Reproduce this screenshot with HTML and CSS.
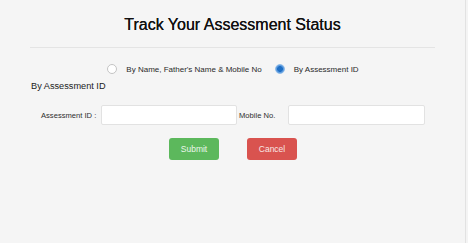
FILE: index.html
```html
<!DOCTYPE html>
<html lang="en">
<head>
<meta charset="utf-8">
<title>Track Your Assessment Status</title>
<link rel="stylesheet" href="styles.css">
</head>
<body>
<div class="panel">
  <h1 class="title">Track Your Assessment Status</h1>
  <div class="rule"></div>
  <div class="choices">
    <label class="choice"><span class="radio"></span><span class="choice-text">By Name, Father's Name &amp; Mobile No</span></label>
    <label class="choice"><span class="radio checked"></span><span class="choice-text">By Assessment ID</span></label>
  </div>
  <div class="section-title">By Assessment ID</div>
  <div class="form-row">
    <label class="field-label first">Assessment ID :</label>
    <div class="input wide1"></div>
    <label class="field-label second">Mobile No.</label>
    <div class="input wide2"></div>
  </div>
  <div class="actions">
    <button class="btn btn-submit" type="button">Submit</button>
    <button class="btn btn-cancel" type="button">Cancel</button>
  </div>
</div>
</body>
</html>
```
FILE: styles.css
```css
html, body {
  margin: 0;
  padding: 0;
  background: #f4f4f4;
}
body {
  font-family: "Liberation Sans", Arial, sans-serif;
  color: #333;
  width: 468px;
  height: 243px;
  overflow: hidden;
}
.panel {
  box-sizing: border-box;
  width: 466px;
  height: 243px;
  padding: 0 30px;
  border-right: 1px solid #e2e2e2;
  background: #f5f5f5;
}
.title {
  margin: 0;
  padding-top: 14px;
  font-size: 16px;
  line-height: 22px;
  font-weight: normal;
  text-align: center;
  color: #111;
  text-shadow: 0 0 0.4px #111;
}
.rule {
  margin-top: 11px;
  border-top: 1px solid #e4e4e4;
}
.choices {
  display: flex;
  justify-content: center;
  align-items: center;
  margin-top: 15px;
  height: 12px;
  padding-left: 1px;
}
.choice {
  display: flex;
  align-items: center;
  font-size: 8px;
  color: #2a2a2a;
}
.choice + .choice {
  margin-left: 13px;
}
.radio {
  box-sizing: border-box;
  width: 10px;
  height: 10px;
  border-radius: 50%;
  border: 1px solid #c4c4c4;
  background: #fff;
  margin-right: 9px;
}
.radio.checked {
  border: 1.5px solid #8dbbe8;
  background: radial-gradient(circle, #1f6fc4 0 2.6px, #5d9be0 3.2px);
}
.section-title {
  margin-top: 5px;
  padding-left: 1px;
  font-size: 9.2px;
  line-height: 12px;
  color: #222;
}
.form-row {
  display: flex;
  align-items: center;
  margin-top: 13px;
  padding-left: 11px;
  height: 20px;
}
.field-label {
  font-size: 7.6px;
  color: #2e2e2e;
}
.field-label.first {
  width: 60px;
}
.field-label.second {
  width: 49px;
  margin-left: 2px;
}
.input {
  box-sizing: border-box;
  height: 20px;
  background: #fff;
  border: 1px solid #e2e2e2;
  border-radius: 2px;
}
.wide1 { width: 136px; }
.wide2 { width: 137px; }
.actions {
  display: flex;
  justify-content: center;
  gap: 28px;
  margin-top: 13px;
  padding-left: 1px;
}
.btn {
  width: 50px;
  height: 22px;
  border: none;
  border-radius: 3px;
  font-family: "Liberation Sans", Arial, sans-serif;
  font-size: 8.5px;
  color: #eaf6ea;
  padding: 0;
}
.btn-submit {
  background: #5cb85c;
}
.btn-cancel {
  background: #d9534f;
  color: #f8e6e5;
}
```
